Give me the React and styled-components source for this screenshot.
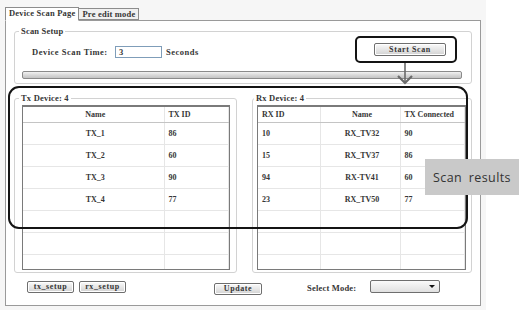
import React from 'react';
import styled, { createGlobalStyle } from 'styled-components';

const GlobalStyle = createGlobalStyle`
  html, body {
    margin: 0;
    padding: 0;
    background: #ffffff;
  }
  body {
    font-family: 'Liberation Serif', 'Times New Roman', serif;
    color: #363636;
  }
`;

const Root = styled.div`
  position: relative;
  width: 519px;
  height: 310px;
  overflow: hidden;
`;

const Window = styled.div`
  width: 486px;
  height: 310px;
  box-sizing: border-box;
  padding: 7px 5px 4px 5px;
  background: #f6f6f6;
  display: flex;
  flex-direction: column;
`;

const TabBar = styled.div`
  display: flex;
  align-items: flex-end;
  height: 13px;
`;

const Tab = styled.div`
  box-sizing: border-box;
  height: ${(p) => (p.$active ? '14px' : '12px')};
  margin-bottom: ${(p) => (p.$active ? '-1px' : '0')};
  padding: 0 3px;
  border: 1px solid #8c8c8c;
  border-bottom: ${(p) => (p.$active ? '1px solid #ffffff' : '1px solid #8c8c8c')};
  border-left: ${(p) => (p.$active ? '1px solid #8c8c8c' : 'none')};
  background: ${(p) => (p.$active ? '#ffffff' : '#f0f0f0')};
  font-size: 8.5px;
  font-weight: bold;
  line-height: 11px;
  letter-spacing: 0.2px;
  white-space: nowrap;
  position: relative;
  z-index: 1;
`;

const Panel = styled.div`
  flex: 1;
  box-sizing: border-box;
  border: 1px solid #9a9a9a;
  background: #ffffff;
  padding: 5px 8px 0 8px;
  display: flex;
  flex-direction: column;
`;

const Group = styled.fieldset`
  margin: 0;
  min-width: 0;
  box-sizing: border-box;
  border: 1px solid #d2d2d2;
  border-radius: 3px;
  padding: ${(p) => p.$pad || '0 6px 2px 7px'};
`;

const Legend = styled.legend`
  padding: 0 2px;
  margin-left: -3px;
  font-size: 8.5px;
  font-weight: bold;
  line-height: 10px;
  letter-spacing: 0.2px;
`;

const ScanRow = styled.div`
  display: flex;
  align-items: flex-start;
  height: 15px;
  margin-top: 7px;
`;

const FieldLabel = styled.span`
  display: inline-block;
  width: ${(p) => p.$width || 'auto'};
  margin-left: ${(p) => p.$left || '0'};
  margin-top: ${(p) => p.$top || '3px'};
  font-size: 8.5px;
  font-weight: bold;
  line-height: 12px;
  letter-spacing: ${(p) => p.$spacing || '0.5px'};
  white-space: nowrap;
`;

const TimeInput = styled.div`
  box-sizing: border-box;
  width: 47px;
  height: 12px;
  margin-top: 3px;
  border: 1px solid #7f9db9;
  background: #ffffff;
  padding-left: 3px;
  font-size: 8.5px;
  font-weight: bold;
  line-height: 10px;
`;

const Button = styled.div`
  box-sizing: border-box;
  width: ${(p) => p.$w};
  height: ${(p) => p.$h || '12px'};
  margin-left: ${(p) => p.$left || '0'};
  margin-right: ${(p) => p.$right || '0'};
  margin-top: ${(p) => p.$top || '0'};
  border: 1px solid #6e6e6e;
  border-radius: 2px;
  background: linear-gradient(#fafafa, #e2e2e2 60%, #d2d2d2);
  box-shadow: inset 0 0 0 1px #ffffff;
  font-size: 8px;
  font-weight: bold;
  line-height: ${(p) => (p.$h ? `calc(${p.$h} - 2px)` : '10px')};
  text-align: center;
  letter-spacing: 0.6px;
  white-space: nowrap;
`;

const Progress = styled.div`
  box-sizing: border-box;
  height: 8px;
  margin-top: 13px;
  border: 1px solid #8a8a8a;
  border-radius: 2px;
  background: linear-gradient(#f2f2f2, #d8d8d8 50%, #c4c4c4);
`;

const DeviceRow = styled.div`
  display: grid;
  grid-template-columns: 223px 1fr;
  gap: 15px;
  margin-top: 9px;
`;

const TableBox = styled.div`
  height: 165px;
  margin-top: 2px;
  box-sizing: border-box;
  overflow: hidden;
  border: 1px solid #7a7a7a;
  border-top-width: 2px;
  background: #ffffff;
`;

const Table = styled.table`
  width: 100%;
  table-layout: fixed;
  border-collapse: collapse;
`;

const HeadCell = styled.th`
  height: 15px;
  padding: 0 0 0 4px;
  border-bottom: 1px solid #c4c4c4;
  border-right: 1px solid #e6e6e6;
  font-size: 8px;
  font-weight: bold;
  text-align: ${(p) => (p.$center ? 'center' : 'left')};
  white-space: nowrap;
  overflow: hidden;
`;

const Cell = styled.td`
  height: 21px;
  padding: 0 0 0 4px;
  border-bottom: 1px solid #e6e6e6;
  border-right: 1px solid #e6e6e6;
  font-size: 8px;
  font-weight: bold;
  text-align: ${(p) => (p.$center ? 'center' : 'left')};
  white-space: nowrap;
`;

const BottomBar = styled.div`
  display: flex;
  align-items: flex-start;
  margin-top: 8px;
`;

const Dropdown = styled.div`
  box-sizing: border-box;
  width: 70px;
  height: 13px;
  margin-left: 14px;
  margin-top: -1px;
  border: 1px solid #6e6e6e;
  border-radius: 2px;
  background: linear-gradient(#fafafa, #e0e0e0);
  display: flex;
  align-items: center;
  justify-content: flex-end;
  padding-right: 4px;
`;

const Caret = styled.span`
  width: 0;
  height: 0;
  border-left: 3px solid transparent;
  border-right: 3px solid transparent;
  border-top: 3px solid #111;
`;

const Highlight = styled.div`
  position: absolute;
  left: ${(p) => p.$x}px;
  top: ${(p) => p.$y}px;
  width: ${(p) => p.$w}px;
  height: ${(p) => p.$h}px;
  box-sizing: border-box;
  border: 2.5px solid #141414;
  border-radius: ${(p) => p.$r}px;
  pointer-events: none;
`;

const Arrow = styled.svg`
  position: absolute;
  left: 396px;
  top: 62px;
`;

const Callout = styled.div`
  position: absolute;
  left: 425px;
  top: 159px;
  width: 94px;
  height: 36px;
  background: #c9c9c9;
  display: flex;
  align-items: center;
  justify-content: center;
  font-family: 'Open Sans', 'Liberation Sans', sans-serif;
  font-size: 12.5px;
  letter-spacing: 0.4px;
  word-spacing: 3px;
  color: #333333;
`;

const txRows = [
  ['TX_1', '86'],
  ['TX_2', '60'],
  ['TX_3', '90'],
  ['TX_4', '77'],
  ['', ''],
  ['', ''],
  ['', ''],
];

const rxRows = [
  ['10', 'RX_TV32', '90'],
  ['15', 'RX_TV37', '86'],
  ['94', 'RX-TV41', '60'],
  ['23', 'RX_TV50', '77'],
  ['', '', ''],
  ['', '', ''],
  ['', '', ''],
];

const App = () => {
  return (
    <Root>
      <GlobalStyle />
      <Window>
        <TabBar>
          <Tab $active>Device Scan Page</Tab>
          <Tab>Pre edit mode</Tab>
        </TabBar>
        <Panel>
          <Group $pad='0 9px 4px 7px'>
            <Legend>Scan Setup</Legend>
            <ScanRow>
              <FieldLabel $width='83px' $left='10px'>
                Device Scan Time:
              </FieldLabel>
              <TimeInput>3</TimeInput>
              <FieldLabel $left='4px'>Seconds</FieldLabel>
              <Button $w='72px' $h='13px' $left='auto' $right='16px'>
                Start Scan
              </Button>
            </ScanRow>
            <Progress />
          </Group>

          <DeviceRow>
            <Group>
              <Legend>Tx Device: 4</Legend>
              <TableBox>
                <Table>
                  <colgroup>
                    <col style={{ width: '141px' }} />
                    <col />
                  </colgroup>
                  <thead>
                    <tr>
                      <HeadCell $center>Name</HeadCell>
                      <HeadCell>TX ID</HeadCell>
                    </tr>
                  </thead>
                  <tbody>
                    {txRows.map((r, i) => (
                      <tr key={i}>
                        <Cell $center>{r[0]}</Cell>
                        <Cell>{r[1]}</Cell>
                      </tr>
                    ))}
                  </tbody>
                </Table>
              </TableBox>
            </Group>

            <Group $pad='0 5px 2px 4px'>
              <Legend>Rx Device: 4</Legend>
              <TableBox>
                <Table>
                  <colgroup>
                    <col style={{ width: '62px' }} />
                    <col style={{ width: '80px' }} />
                    <col />
                  </colgroup>
                  <thead>
                    <tr>
                      <HeadCell>RX ID</HeadCell>
                      <HeadCell $center>Name</HeadCell>
                      <HeadCell>TX Connected</HeadCell>
                    </tr>
                  </thead>
                  <tbody>
                    {rxRows.map((r, i) => (
                      <tr key={i}>
                        <Cell>{r[0]}</Cell>
                        <Cell $center>{r[1]}</Cell>
                        <Cell>{r[2]}</Cell>
                      </tr>
                    ))}
                  </tbody>
                </Table>
              </TableBox>
            </Group>
          </DeviceRow>

          <BottomBar>
            <Button $w='47px' $left='13px'>
              tx_setup
            </Button>
            <Button $w='47px' $left='5px'>
              rx_setup
            </Button>
            <Button $w='48px' $left='88px' $top='2px'>
              Update
            </Button>
            <FieldLabel $left='45px' $top='1px' $spacing='0.2px'>
              Select Mode:
            </FieldLabel>
            <Dropdown>
              <Caret />
            </Dropdown>
          </BottomBar>
        </Panel>
      </Window>

      <Highlight $x={355} $y={36} $w={102} $h={27} $r={5} />
      <Highlight $x={8} $y={86} $w={460} $h={143} $r={11} />
      <Arrow width='18' height='24' viewBox='0 0 18 24'>
        <line x1='9' y1='1' x2='9' y2='20' stroke='#6a6a6a' strokeWidth='1.6' />
        <polyline
          points='2,14 9,21 16,14'
          fill='none'
          stroke='#6a6a6a'
          strokeWidth='2.2'
        />
      </Arrow>
      <Callout>Scan results</Callout>
    </Root>
  );
};

export default App;
